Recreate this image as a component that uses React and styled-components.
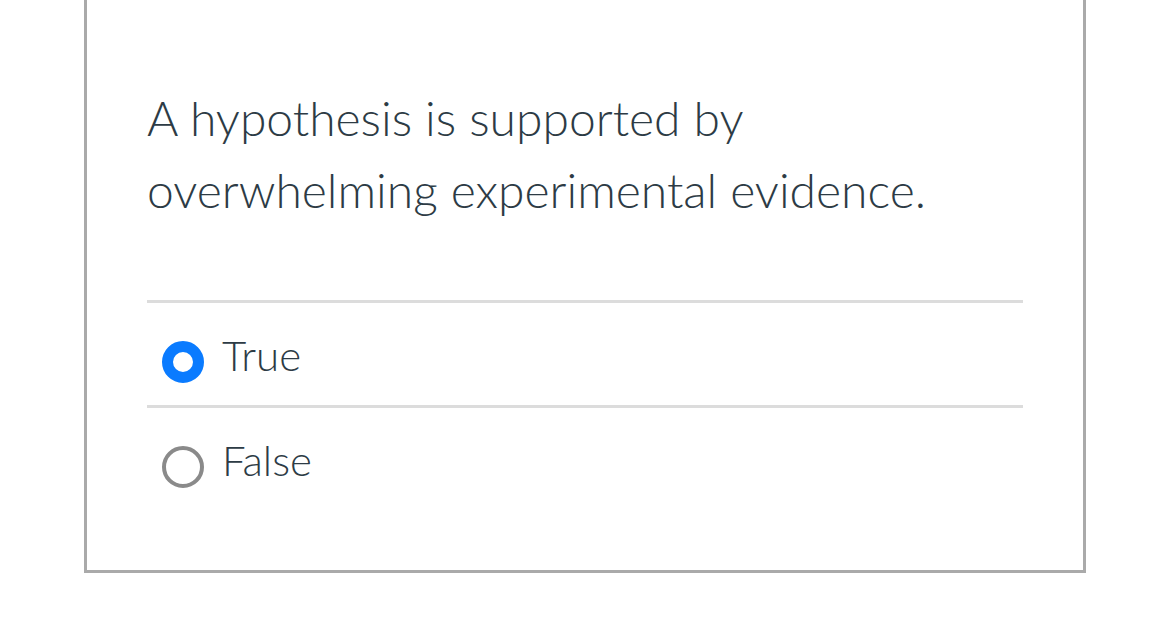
import React, { useState } from 'react';
import styled, { createGlobalStyle } from 'styled-components';

const GlobalStyle = createGlobalStyle`
    body {
        margin:0;
        background:#fff;
        font-family:Lato, "Noto Sans", sans-serif;
    }
`

const options = ['True', 'False'];

const App = () => {
    const [selected, setSelected] = useState('True');

    return(
        <Page>
            <GlobalStyle/>
            <QuestionCard>
                <QuestionText>A hypothesis is supported by overwhelming experimental evidence.</QuestionText>
                <AnswerList>
                    {options.map((opt) => (
                        <AnswerRow key={opt} onClick={() => setSelected(opt)}>
                            <Radio checked={selected === opt}/>
                            <AnswerLabel>{opt}</AnswerLabel>
                        </AnswerRow>
                    ))}
                </AnswerList>
            </QuestionCard>
        </Page>
    )
}

export default App;

const Page = styled.div`
    padding:0 0 45px 84px;
`

const QuestionCard = styled.div`
    width:1002px;
    box-sizing:border-box;
    margin-top:-3px;
    padding:82px 60px 60px;
    border:3px solid #aaaaaa;
    background:#fff;
`

const QuestionText = styled.p`
    margin:0 0 74px;
    font-size:48px;
    font-weight:300;
    line-height:72px;
    color:#2d3b45;
`

const AnswerList = styled.div`
    display:flex;
    flex-direction:column;
`

const AnswerRow = styled.label`
    display:flex;
    align-items:flex-start;
    gap:18px;
    height:105px;
    box-sizing:border-box;
    padding:21px 0 0 15px;
    border-top:3px solid #dcdcdc;
    cursor:pointer;
`

const Radio = styled.span`
    flex:none;
    width:42px;
    height:42px;
    box-sizing:border-box;
    margin-top:17px;
    border-radius:50%;
    border:${(p) => p.checked ? '11px solid #0a7bff' : '4px solid #8a8a8a'};
    background:#fff;
`

const AnswerLabel = styled.span`
    font-size:42px;
    font-weight:300;
    line-height:63px;
    color:#2d3b45;
`
